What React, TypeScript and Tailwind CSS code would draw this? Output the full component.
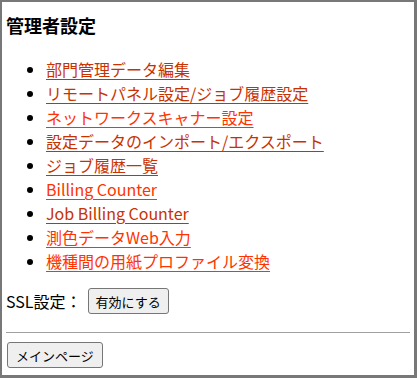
import React from "react";

const links = [
  { name: "部門管理データ編集", visited: true },
  { name: "リモートパネル設定/ジョブ履歴設定", visited: true },
  { name: "ネットワークスキャナー設定", visited: false },
  { name: "設定データのインポート/エクスポート", visited: true },
  { name: "ジョブ履歴一覧", visited: true },
  { name: "Billing Counter", visited: false },
  { name: "Job Billing Counter", visited: true },
  { name: "測色データWeb入力", visited: false },
  { name: "機種間の用紙プロファイル変換", visited: false },
];

const font = "font-['Noto_Sans_CJK_JP','Noto_Sans',sans-serif]";

export default function App() {
  return (
    <div
      className={`${font} w-[417px] h-[378px] bg-white text-black border-l-2 border-t-2 border-r-[3px] border-b-[3px] border-[#787878] px-[4px] overflow-hidden`}
    >
      {/* 見出し */}
      <h1 className="mt-[11px] text-[18px] leading-[24px] font-bold">管理者設定</h1>

      <ul className="mt-[20px] list-disc pl-[40px] text-[16px]">
        {links.map((item) => (
          <li key={item.name} className="leading-[24px] h-[24px]">
            <a
              href="#"
              className={[
                "underline underline-offset-[3px]",
                item.visited ? "text-[#c83200]" : "text-[#ff3300]",
              ].join(" ")}
            >
              {item.name}
            </a>
          </li>
        ))}
      </ul>

      {/* SSL */}
      <div className="mt-[15px] flex items-center text-[16px] leading-[24px]">
        <span>SSL設定：</span>
        <button
          type="button"
          className="ml-[6px] h-[26px] px-[7px] text-[13px] leading-none bg-[#efefef] border border-[#767676] rounded-[3px]"
        >
          有効にする
        </button>
      </div>

      <hr className="mt-[18px] border-t border-[#a0a0a0]" />

      <button
        type="button"
        className="mt-[9px] ml-[1px] h-[26px] px-[8px] text-[13px] leading-none bg-[#efefef] border border-[#767676] rounded-[3px]"
      >
        メインページ
      </button>
    </div>
  );
}
